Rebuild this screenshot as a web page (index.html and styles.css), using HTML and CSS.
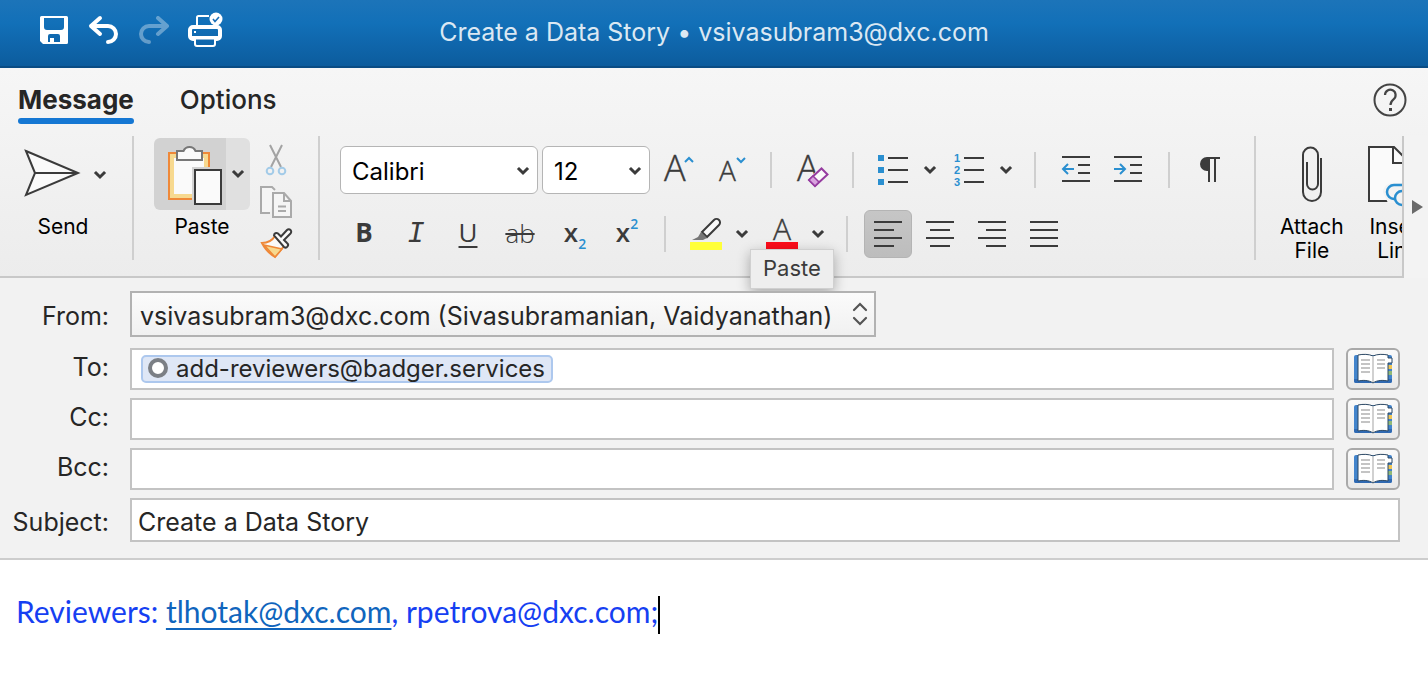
FILE: index.html
```html
<!DOCTYPE html>
<html lang="en">
<head>
<meta charset="utf-8">
<title>Create a Data Story</title>
<link rel="stylesheet" href="styles.css">
</head>
<body>
<svg class="defs" aria-hidden="true">
  <symbol id="chev" viewBox="0 0 16 12"><path d="M4 4l4 4 4-4" fill="none" stroke="currentColor" stroke-width="3" stroke-linecap="square"/></symbol>
  <symbol id="book" viewBox="0 0 40 32">
    <rect x="1" y="2" width="38" height="28" rx="2" fill="#4284cc"/>
    <path d="M1 26h38v2a2 2 0 0 1-2 2H3a2 2 0 0 1-2-2z" fill="#2f69b2"/>
    <path d="M35 12h4v4h-4z" fill="#f0c552"/><path d="M35 18h4v4h-4z" fill="#8fb878"/>
    <path d="M20 3C16 1 10 1 5 2v26c5-1 11-1 15 2 4-3 10-3 15-2V10h4V5h-4V2c-5-1-11-1-15 1z" fill="#fff" stroke="#2a4763" stroke-width="1"/>
    <path d="M20 4v25" stroke="#c2c2c2" stroke-width="1.500"/>
    <path d="M8 7h9M8 11h9M8 15h9M8 19h9M24 7h8M24 11h8M24 15h8" stroke="#c4c4c4" stroke-width="2"/>
  </symbol>
</svg>

<header class="titlebar">
  <div class="quick">
    <button class="plain" aria-label="Save"><svg width="28" height="28" viewBox="0 0 28 28"><path fill-rule="evenodd" fill="#fff" d="M1.500 0h25A1.500 1.500 0 0 1 28 1.500v25a1.500 1.500 0 0 1-1.500 1.500H3L0 25V1.500A1.500 1.500 0 0 1 1.500 0zM4 2v9a3 3 0 0 0 3 3h14a3 3 0 0 0 3-3V2zM8 26V20a2 2 0 0 1 2-2h8a2 2 0 0 1 2 2v6h-6v-4h-4v4z"/></svg></button>
    <button class="plain" aria-label="Undo"><svg width="34" height="28" viewBox="-2 0 34 28"><path d="M12 2L3 10l9 8M3 10h17a8 8 0 0 1 0 16" fill="none" stroke="#fff" stroke-width="4" stroke-linecap="round" stroke-linejoin="round"/></svg></button>
    <button class="plain dim" aria-label="Redo"><svg width="32" height="28" viewBox="0 0 32 28"><path d="M20 2l9 8-9 8M29 10H11a8 8 0 0 0 0 16" fill="none" stroke="#fff" stroke-width="4" stroke-linecap="round" stroke-linejoin="round"/></svg></button>
    <button class="plain" aria-label="Print"><svg width="36" height="34" viewBox="0 0 36 34"><g fill="none" stroke="#fff"><path d="M9 13V4.500A1.500 1.500 0 0 1 10.500 3H21" stroke-width="2"/><path d="M7 26H5a3 3 0 0 1-3-3v-6a3 3 0 0 1 3-3h24a3 3 0 0 1 3 3v6a3 3 0 0 1-3 3h-2" stroke-width="4"/><path d="M7 25.500h20v5.500a2 2 0 0 1-2 2H9a2 2 0 0 1-2-2z" stroke-width="2"/></g><path d="M6 18h2v2H6z" fill="#fff"/><path d="M3 23h28v3H3z" fill="#fff"/><circle cx="28" cy="6" r="6.500" fill="#fff"/><path d="M25 6l2 2.500L31 4" fill="none" stroke="#1b6fb7" stroke-width="1.600"/></svg></button>
  </div>
  <h1 class="title">Create a Data Story • vsivasubram3@dxc.com</h1>
</header>

<section class="ribbon">
  <nav class="tabs">
    <button class="tab active">Message</button>
    <button class="tab">Options</button>
    <button class="plain help" aria-label="Help"><svg width="34" height="34" viewBox="0 0 34 34"><circle cx="17" cy="17" r="15.500" fill="none" stroke="#444" stroke-width="2"/><path d="M12 12a5.300 5.300 0 1 1 8.500 4.300C18 18.200 17.500 19 17.500 22" fill="none" stroke="#444" stroke-width="2.200"/><path d="M16 25h3v3h-3z" fill="#444"/></svg></button>
  </nav>
  <div class="strip">
    <div class="groups">
      <div class="group send">
        <div class="split">
          <button class="plain" aria-label="Send message"><svg width="56" height="48" viewBox="0 0 56 48"><path d="M2 2l52 22L2 46l9-22z" fill="#fafafa" stroke="#3b3b3b" stroke-width="2"/><path d="M11 24h42" stroke="#3b3b3b" stroke-width="2"/></svg></button>
          <button class="plain chev" aria-label="Send options"><svg width="16" height="12"><use href="#chev"/></svg></button>
        </div>
        <span class="caption">Send</span>
      </div>
      <div class="group clipboard">
        <div class="paste">
          <div class="pastebtn">
            <button class="pasteicon" aria-label="Paste"><svg width="56" height="62" viewBox="0 0 56 62"><path d="M1 8h40v46H1z" fill="#fafafa"/><path d="M4 11h34v40H4z" fill="none" stroke="#f7d98f" stroke-width="4"/><path d="M1 8h40v46H1z" fill="none" stroke="#ef8838" stroke-width="2"/><path d="M9 6h6.500a6.500 6.500 0 0 1 12 0H34v9H9z" fill="#fafafa" stroke="#777" stroke-width="2"/><path d="M24 22h32v40H24z" fill="#d2d2d2"/><path d="M27 25h26v34H27z" fill="#fafafa" stroke="#3b3b3b" stroke-width="2"/></svg></button>
            <button class="pastemore" aria-label="Paste options"><svg width="16" height="12"><use href="#chev"/></svg></button>
          </div>
          <span class="caption">Paste</span>
        </div>
        <div class="clips">
          <button class="plain" aria-label="Cut"><svg width="32" height="32" viewBox="0 0 32 32"><path d="M10 1l11 22M22 1L11 23" stroke="#a3a3a3" stroke-width="2" fill="none"/><g fill="none" stroke="#a3cbe8" stroke-width="2"><circle cx="10" cy="27" r="3.300"/><circle cx="22" cy="27" r="3.300"/></g></svg></button>
          <button class="plain" aria-label="Copy"><svg width="32" height="32" viewBox="0 0 32 32"><g fill="#f5f5f5" stroke="#aaa" stroke-width="2"><path d="M10 27H1V1h11l3 3"/><path d="M13 7h11l7 8v16H13z"/><path d="M24 7v8h7M18 20.500h8M18 25h8" fill="none"/></g></svg></button>
          <button class="plain" aria-label="Format painter"><svg width="32" height="32" viewBox="0 0 32 32"><path d="M2 15c6 0 10-2 13-7l9 10c-3 4-6 7-9 11C10 26 5 21 2 15z" fill="#fafafa" stroke="#ef8838" stroke-width="2"/><path d="M4 17l18 4-7 8z" fill="#f7d98f" stroke="#ef8838" stroke-width="1.500"/><path d="M14 7.500a2.500 2.500 0 0 1 4-2l3 3 6-6.500a2.300 2.300 0 0 1 3.500 3.500L24 12l3 3a2.500 2.500 0 0 1-3 4z" fill="#fafafa" stroke="#3b3b3b" stroke-width="2"/></svg></button>
        </div>
      </div>
      <div class="group format">
        <div class="row">
          <div class="set">
            <span class="pick family"><select aria-label="Font"><option>Calibri</option></select><svg width="16" height="12"><use href="#chev"/></svg></span>
            <span class="pick size"><select aria-label="Font size"><option>12</option></select><svg width="16" height="12"><use href="#chev"/></svg></span>
            <button class="tool" aria-label="Grow font"><svg width="32" height="48" viewBox="0 0 32 48"><text class="glyph" x="2" y="35" font-size="36">A</text><path d="M23 16l4-4 4 4" class="blue"/></svg></button>
            <button class="tool" aria-label="Shrink font"><svg width="32" height="48" viewBox="0 0 32 48"><text class="glyph" x="5" y="35" font-size="28">A</text><path d="M23 12l4 4 4-4" class="blue"/></svg></button>
          </div>
          <div class="set">
            <button class="tool" aria-label="Clear formatting"><svg width="34" height="48" viewBox="0 0 34 48"><text class="glyph" x="2" y="35" font-size="36">A</text><path d="M13 35L26 19l8 8-13 15z" fill="#f1f1f1"/><path d="M14 34L26.500 22.500l6 6L20 40z" fill="#fafafa" stroke="#963ca0" stroke-width="2"/><path d="M14 34l4-4 6 6-4 4z" fill="#d9a3df" stroke="#963ca0" stroke-width="1.500"/></svg></button>
          </div>
          <div class="set">
            <button class="tool" aria-label="Bullets"><svg width="32" height="34" viewBox="0 0 32 34"><path d="M0 2h6v6H0zM0 14h6v6H0zM0 26h6v6H0z" fill="#2a8fd0"/><path class="ink" d="M10 5h20M10 17h20M10 29h20"/></svg></button><button class="plain chev" aria-label="Bullet styles"><svg width="16" height="12"><use href="#chev"/></svg></button>
            <button class="tool" aria-label="Numbering"><svg width="32" height="34" viewBox="0 0 32 34"><g class="num"><text x="0" y="9">1</text><text x="0" y="21">2</text><text x="0" y="33">3</text></g><path class="ink" d="M10 5h20M10 17h20M10 29h20"/></svg></button><button class="plain chev" aria-label="Numbering styles"><svg width="16" height="12"><use href="#chev"/></svg></button>
          </div>
          <div class="set">
            <button class="tool" aria-label="Decrease indent"><svg width="28" height="26" viewBox="0 0 28 26"><path class="ink" d="M0 0h28M16 8h12M16 16h12M0 24h28"/><path class="blue" d="M12 12H2M6 7l-5 5 5 5"/></svg></button>
            <button class="tool" aria-label="Increase indent"><svg width="28" height="26" viewBox="0 0 28 26"><path class="ink" d="M0 0h28M16 8h12M16 16h12M0 24h28"/><path class="blue" d="M0 12h10M6 7l5 5-5 5"/></svg></button>
          </div>
          <div class="set">
            <button class="tool" aria-label="Show formatting marks"><svg width="20" height="26" viewBox="0 0 20 26"><path d="M7 0h13v2H7zM8 1v13H7A7 7 0 0 1 7 0z" fill="#3b3b3b"/><path d="M9 0v25M15 0v25" stroke="#3b3b3b" stroke-width="2"/></svg></button>
          </div>
        </div>
        <div class="row">
          <div class="set">
            <button class="tool bold">B</button>
            <button class="tool italic">I</button>
            <button class="tool under">U</button>
            <button class="tool strike">ab</button>
            <button class="tool script">x<sub>2</sub></button>
            <button class="tool script">x<sup>2</sup></button>
          </div>
          <div class="set">
            <button class="tool" aria-label="Highlight"><svg width="32" height="48" viewBox="0 0 32 48"><path d="M12 22L24 10a3.500 3.500 0 0 1 5 5L17 27z" fill="#fafafa" stroke="#3b3b3b" stroke-width="2"/><path d="M11 22l6 6-4 2H2l6-3z" fill="#777"/><path d="M0 32h32v8H0z" fill="#ffff38"/></svg></button><button class="plain chev" aria-label="Highlight colours"><svg width="16" height="12"><use href="#chev"/></svg></button>
            <button class="tool" aria-label="Font colour"><svg width="32" height="48" viewBox="0 0 32 48"><text class="glyph" x="7" y="30" font-size="30">A</text><path d="M0 32h32v8H0z" fill="#fc0d1b"/></svg></button><button class="plain chev" aria-label="Font colours"><svg width="16" height="12"><use href="#chev"/></svg></button>
          </div>
          <div class="set">
            <button class="tool on" aria-label="Align left"><svg width="28" height="26" viewBox="0 0 28 26"><path class="ink" d="M0 1h28M0 9h20M0 17h28M0 25h20"/></svg></button>
            <button class="tool" aria-label="Centre"><svg width="28" height="26" viewBox="0 0 28 26"><path class="ink" d="M0 1h28M4 9h20M0 17h28M4 25h20"/></svg></button>
            <button class="tool" aria-label="Align right"><svg width="28" height="26" viewBox="0 0 28 26"><path class="ink" d="M0 1h28M8 9h20M0 17h28M8 25h20"/></svg></button>
            <button class="tool" aria-label="Justify"><svg width="28" height="26" viewBox="0 0 28 26"><path class="ink" d="M0 1h28M0 9h28M0 17h28M0 25h28"/></svg></button>
          </div>
        </div>
      </div>
      <div class="group insert">
        <button class="big"><svg width="22" height="56" viewBox="0 0 22 56"><path d="M20 12v34a9 9 0 0 1-18 0V9a7.500 7.500 0 0 1 15 0v29a5.500 5.500 0 0 1-11 0V16" fill="none" stroke="#3b3b3b" stroke-width="2"/></svg><span>Attach<br>File</span></button>
        <button class="big"><svg width="60" height="56" viewBox="0 0 60 56"><path d="M1 1h25l12 12v42H1z" fill="#fafafa" stroke="#3b3b3b" stroke-width="2"/><path d="M25 1v16h14" fill="none" stroke="#3b3b3b" stroke-width="2"/><path d="M15 46a9 9 0 0 1 9-9h21v20H20z" fill="#f3f3f3"/><g fill="none" stroke="#2a8fd0" stroke-width="2.500"><path d="M27 53h-1a7 7 0 0 1 0-14h14a7 7 0 0 1 6 7"/><path d="M34 59a7 7 0 0 1 0-14"/></g></svg><span>Insert<br>Link</span></button>
      </div>
    </div>
    <button class="plain scroll" aria-label="More tools"><svg width="12" height="14" viewBox="0 0 12 14"><path d="M0 0l11 7-11 7z" fill="#6a6a6a"/></svg></button>
  </div>
  <div class="tooltip" role="tooltip">Paste</div>
</section>

<form class="fields">
  <div class="field from"><label for="from">From:</label><span class="pick"><select id="from"><option>vsivasubram3@dxc.com (Sivasubramanian, Vaidyanathan)</option></select><svg width="16" height="24" viewBox="0 0 16 24"><path d="M2 8l6-6 6 6M2 16l6 6 6-6" fill="none" stroke="#555" stroke-width="2.200" stroke-linecap="round"/></svg></span></div>
  <div class="field"><label for="to">To:</label><div class="box"><span class="chip"><i class="status"></i>add-reviewers@badger.services</span><input id="to" type="text"></div><button type="button" class="book" aria-label="Choose To recipients"><svg width="40" height="32"><use href="#book"/></svg></button></div>
  <div class="field"><label for="cc">Cc:</label><div class="box"><input id="cc" type="text"></div><button type="button" class="book" aria-label="Choose Cc recipients"><svg width="40" height="32"><use href="#book"/></svg></button></div>
  <div class="field"><label for="bcc">Bcc:</label><div class="box"><input id="bcc" type="text"></div><button type="button" class="book" aria-label="Choose Bcc recipients"><svg width="40" height="32"><use href="#book"/></svg></button></div>
  <div class="field subject"><label for="subject">Subject:</label><div class="box"><input id="subject" type="text" value="Create a Data Story"></div></div>
</form>

<main class="message"><p>Reviewers: <a href="mailto:tlhotak@dxc.com">tlhotak@dxc.com</a>, rpetrova@dxc.com;<span class="caret"></span></p></main>
</body>
</html>
```
FILE: styles.css
```css
* { box-sizing: border-box; }
body {
  margin: 0;
  min-height: 100vh;
  display: flex;
  flex-direction: column;
  background: #fff;
  color: #262626;
  font-family: Inter, "Liberation Sans", sans-serif;
  font-size: 25px;
}
.defs { position: absolute; width: 0; height: 0; }
svg { display: block; flex: none; overflow: visible; }
button { font: inherit; color: inherit; margin: 0; padding: 0; border: 0; background: none; }
input, select { font: inherit; color: inherit; }

.plain { display: flex; align-items: center; justify-content: center; }
.dim { opacity: .35; }

.titlebar {
  display: grid;
  grid-template-columns: 1fr auto 1fr;
  align-items: center;
  height: 68px;
  padding-bottom: 6px;
  border-bottom: 2px solid #0a4c84;
  background: linear-gradient(#1c74b9, #1270b8 35%, #0f65aa 70%, #0c5c9d);
}
.quick { display: flex; align-items: center; gap: 18px; padding-left: 40px; }
.title { margin: 0; padding-top: 4px; font-size: 25px; font-weight: 400; color: #dbe8f3; }

.ribbon { position: relative; background: linear-gradient(#f6f6f6, #f2f2f2 40%, #ececec); color: #3b3b3b; }
.tabs { display: flex; align-items: flex-start; height: 68px; padding: 12px 21px 0 18px; gap: 46px; }
.tab { position: relative; height: 44px; padding-bottom: 6px; font-size: 26px; font-weight: 500; color: #262626; }
.tab.active { font-weight: 700; }
.tab.active::after { content: ""; position: absolute; left: 0; right: 0; bottom: 0; height: 6px; border-radius: 3px; background: #1577d3; }
.help { margin: 3px 0 0 auto; }

.strip { display: flex; }
.groups {
  flex: 1;
  min-width: 0;
  display: flex;
  overflow: hidden;
  padding-bottom: 16px;
  border-right: 2px solid #c8c8c8;
  border-bottom: 2px solid #c8c8c8;
}
.scroll { width: 24px; padding-left: 4px; background: #f3f3f3; }
.group { flex: none; height: 124px; border-right: 2px solid #cfcfcf; }
.caption { color: #000; font-size: 21px; line-height: 24px; text-align: center; }
.chev { width: 24px; height: 48px; color: #3b3b3b; }

.send { display: flex; flex-direction: column; padding: 13px 20px 0 24px; width: 134px; }
.send .split { display: flex; gap: 8px; margin-bottom: 18px; }
.send .chev { padding-top: 4px; }
.send .caption { margin-right: 10px; }

.clipboard { display: flex; gap: 10px; width: 186px; padding: 2px 0 0 20px; }
.paste { display: flex; flex-direction: column; gap: 5px; }
.pastebtn { display: flex; height: 72px; border-radius: 6px; overflow: hidden; }
.pasteicon { display: flex; align-items: center; justify-content: center; width: 72px; padding: 4px 0 0 12px; background: #d2d2d2; }
.pastemore { display: flex; align-items: center; justify-content: center; width: 24px; background: #e0e0e0; }
.clips { display: flex; flex-direction: column; gap: 10px; padding-top: 6px; }

.format { display: flex; flex-direction: column; gap: 16px; padding: 10px 20px 0; }
.row { display: flex; height: 48px; }
.set { display: flex; gap: 4px; }
.set + .set { padding-left: 34px; background: linear-gradient(#cfcfcf, #cfcfcf) 16px 6px / 2px 36px no-repeat; }
.set .chev { margin-left: -4px; }
.tool { display: flex; align-items: center; justify-content: center; width: 48px; height: 48px; border-radius: 6px; font-family: "Open Sans", "Noto Sans", sans-serif; font-size: 26px; }
.tool.on { background: linear-gradient(#c6c6c6, #bdbdbd); border: 1px solid #b4b4b4; }
.glyph { font-family: "Open Sans", sans-serif; font-weight: 300; fill: #3b3b3b; stroke: #3b3b3b; stroke-width: 0.4px; }
.num { font: 700 11px "Liberation Sans", sans-serif; fill: #2a8fd0; }
.ink { fill: none; stroke: #3b3b3b; stroke-width: 2px; }
.blue { fill: none; stroke: #2a8fd0; stroke-width: 2px; }
.bold, .under, .script { padding-bottom: 4px; }
.bold { font-weight: 700; }
.italic { font-family: "Liberation Mono", monospace; font-style: italic; font-size: 29px; }
.under { text-decoration: underline; text-decoration-thickness: 2px; text-underline-offset: 4px; }
.strike { text-decoration: line-through; text-decoration-thickness: 2px; padding-bottom: 2px; font-weight: 300; }
.script { padding-left: 6px; font-weight: 600; }
.script sub, .script sup { color: #2a8fd0; font-size: 14px; line-height: 14px; }
.script sub { align-self: flex-end; padding-bottom: 3px; }
.script sup { align-self: flex-start; padding-top: 7px; }

.pick { position: relative; display: block; }
.pick select { appearance: none; width: 100%; margin: 0; }
.pick svg { position: absolute; right: 7px; top: 19px; pointer-events: none; }
.family { width: 198px; }
.size { width: 108px; }
.format select { height: 48px; padding: 2px 11px 0; border: 1px solid #b5b5b5; border-radius: 6px; background: #fff; color: #000; font-size: 24px; }

.insert { display: flex; gap: 24px; padding: 10px 0 0 24px; border: 0; }
.big { display: flex; flex-direction: column; align-items: center; gap: 13px; color: #000; font-size: 21px; line-height: 24px; }

.tooltip {
  position: absolute;
  left: 750px;
  top: 181px;
  padding: 4px 12px 6px;
  border: 1px solid #d0d0d0;
  background: #eee;
  font-size: 22px;
  line-height: 28px;
  box-shadow: 0 4px 12px rgba(0, 0, 0, .3);
}

.fields { display: flex; flex-direction: column; gap: 8px; padding: 13px 28px 16px 0; background: #f2f2f2; border-bottom: 2px solid #cdcdcd; }
.field { display: flex; align-items: stretch; height: 42px; }
.field label { flex: none; width: 130px; padding-right: 21px; text-align: right; line-height: 38px; }
.field.from { height: 46px; margin-bottom: 3px; }
.field.from label { line-height: 50px; }
.field.subject { height: 44px; }
.field.subject label { line-height: 48px; }
.from select { min-width: 746px; height: 46px; padding: 4px 36px 0 8px; border: 2px solid #b2b2b2; border-radius: 0; background: linear-gradient(#fbfbfb, #f1f1f1); }
.from .pick svg { top: 11px; right: 8px; }
.box { flex: 1; min-width: 0; display: flex; align-items: center; padding: 0 6px; border: 2px solid #c3c3c3; background: #fff; }
.box input { flex: 1; min-width: 0; height: 100%; padding: 4px 0 0; border: 0; outline: 0; background: none; }
.chip { display: flex; align-items: center; gap: 8px; height: 28px; margin-left: 3px; padding: 0 6px 2px 5px; border: 2px solid #adc8ee; border-radius: 5px; background: #dfe7f6; font-size: 24px; }
.status { width: 20px; height: 20px; border: 4px solid #7b7f85; border-radius: 50%; background: #fff; }
.book { display: flex; align-items: center; justify-content: center; width: 54px; margin-left: 12px; border: 2px solid #a9a9a9; border-radius: 6px; background: linear-gradient(#fafafa, #e9e9e9); }

.message { flex: 1; padding: 31px 16px; font-family: Lato, sans-serif; font-size: 30px; line-height: 40px; color: #163ff2; }
.message p { margin: 0; }
.message a { color: #1065bd; text-underline-offset: 5px; text-decoration-thickness: 2px; }
.caret { display: inline-block; width: 2px; height: 38px; background: #000; vertical-align: middle; }
```
